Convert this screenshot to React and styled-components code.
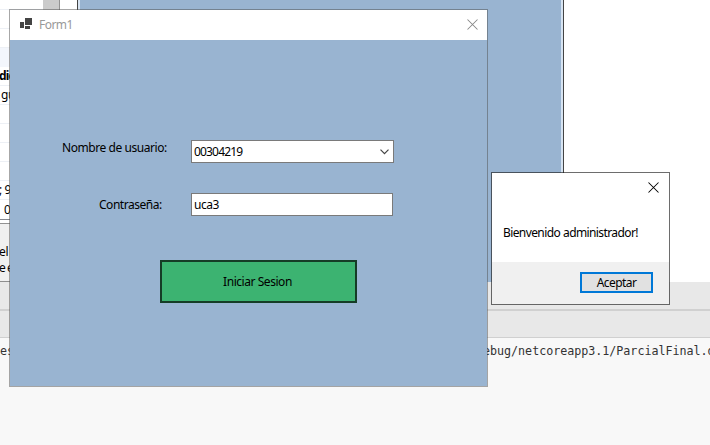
import React from "react";
import styled, { createGlobalStyle } from "styled-components";

const Global = createGlobalStyle`
  * { box-sizing: border-box; }
  body { margin: 0; overflow: hidden; }
  button, input { margin: 0; border-radius: 0; outline: 0; appearance: none; }
`;

const Desktop = styled.main`
  position: relative;
  width: 710px;
  height: 445px;
  overflow: hidden;
  display: flex;
  flex-direction: column;
  background: #f8f8f8;
  color: #000;
  font: 12px/16px "Noto Sans", "Open Sans", sans-serif;
`;

const Workspace = styled.div`
  height: 282px;
  display: flex;
  background: #fff;
`;

const Explorer = styled.div`
  width: 43px;
  height: 282px;
  display: flex;
  flex-direction: column;
  overflow: hidden;
`;

const GridRow = styled.div`
  height: ${(p) => p.$h}px;
  flex: none;
  padding-left: ${(p) => p.$x || 0}px;
  border-bottom: 1px solid ${(p) => p.$line || "#edf0f5"};
  background: ${(p) => p.$bg || "#fff"};
  font-weight: ${(p) => (p.$bold ? 700 : 400)};
  line-height: ${(p) => p.$h - 1}px;
  letter-spacing: ${(p) => (p.$bold ? -0.8 : -0.4)}px;
  text-indent: ${(p) => p.$shift || 0}px;
  white-space: nowrap;
`;

const HelpPanel = styled.div`
  height: 58px;
  flex: none;
  padding-top: 20px;
  background: #f0f0f0;
  border-bottom: 1px solid #8e8e8e;
  text-indent: -1px;
  white-space: nowrap;
`;

const HelpLine = styled.div`
  letter-spacing: ${(p) => p.$track}px;
`;

const Scrollbar = styled.div`
  width: 17px;
  background: #cbcbcb;
  border-right: 1px solid #929292;
`;

const DesignerForm = styled.div`
  width: 487px;
  margin-left: 17px;
  border: solid #444;
  border-width: 0 1px;
  padding: 0 2px;
  background: #d7e4f2;
`;

const DesignerSurface = styled.div`
  height: 100%;
  background: #99b4d1;
`;

const ToolBand = styled.div`
  height: ${(p) => p.$h}px;
  background: #e8e8e8;
  border-bottom: ${(p) => p.$line}px solid #d0d0d0;
`;

const Console = styled.div`
  display: flex;
  justify-content: space-between;
  padding-top: 5px;
  font: 11.7px/17px "DejaVu Sans Mono", monospace;
  letter-spacing: -0.02px;
  color: #333;
  white-space: pre;
`;

const ConsoleTail = styled.span`
  width: 234px;
`;

const Window = styled.section`
  position: absolute;
  left: ${(p) => p.$x}px;
  top: ${(p) => p.$y}px;
  width: ${(p) => p.$w}px;
  height: ${(p) => p.$h}px;
  border: 1px solid ${(p) => p.$line};
  background: ${(p) => p.$bg};
  background-clip: padding-box;
  display: flex;
  flex-direction: column;
`;

const TitleBar = styled.header`
  height: 30px;
  flex: none;
  display: flex;
  align-items: center;
  padding: 0 9px 1px 9px;
  background: #fff;
`;

const Title = styled.h1`
  flex: 1;
  margin: 1px 0 0 6px;
  font-size: 12px;
  font-weight: 400;
  letter-spacing: -0.55px;
  color: #999;
`;

const CloseButton = styled.button`
  display: flex;
  padding: 0;
  border: 0;
  background: none;
  color: ${(p) => p.$color};
`;

const LoginForm = styled.form`
  padding-top: 100px;
`;

const Field = styled.div`
  height: 53px;
  display: flex;
  align-items: flex-start;
`;

const Label = styled.label`
  width: ${(p) => p.$w}px;
  padding: ${(p) => p.$top}px 0 0 ${(p) => p.$x}px;
  letter-spacing: ${(p) => p.$track}px;
  white-space: nowrap;
`;

const Box = styled.div`
  width: ${(p) => p.$w}px;
  height: 23px;
  display: flex;
  align-items: center;
  padding: 0 4px 0 2px;
  border: 1px solid #7a7a7a;
  background: #fff;
`;

const Input = styled.input`
  flex: 1;
  min-width: 0;
  height: 20px;
  padding: 0 0 1px;
  border: 0;
  background: none;
  color: #000;
  font: inherit;
  letter-spacing: ${(p) => p.$track}px;
`;

const SubmitButton = styled.button`
  display: block;
  width: 197px;
  height: 43px;
  margin: 14px 0 0 150px;
  padding: 0 2px 0 0;
  border: 2px solid #153c26;
  background: #3cb371;
  color: #000;
  font: inherit;
  letter-spacing: -0.45px;
`;

const MessageHead = styled.header`
  height: 29px;
  display: flex;
  justify-content: flex-end;
  padding: 9px 10px 0 0;
`;

const Message = styled.p`
  height: 60px;
  margin: 0;
  padding: 23px 0 0 11px;
  letter-spacing: -0.6px;
  word-spacing: 0.4px;
  white-space: nowrap;
`;

const MessageFooter = styled.footer`
  flex: 1;
  display: flex;
  justify-content: flex-end;
  align-items: flex-start;
  padding: 10px 16px 0 0;
  background: #f0f0f0;
`;

const AcceptButton = styled.button`
  width: 73px;
  height: 21px;
  padding: 0;
  border: 2px solid #0078d7;
  background: #e1e1e1;
  color: #000;
  font: 12px/16px "Noto Sans", "Open Sans", sans-serif;
  letter-spacing: -0.55px;
`;

const CloseIcon = () => (
  <svg width="11" height="11" viewBox="0 0 11 11">
    <path d="M.5 .5l10 10M10.5 .5l-10 10" fill="none" stroke="currentColor" strokeWidth="1.05" />
  </svg>
);

const FormIcon = () => (
  <svg width="14" height="13" viewBox="0 0 14 13" fill="#444" shapeRendering="crispEdges">
    <path d="M6 0h7v7H6zM1 4h4v6H1zM6 8h5v3H6z" />
  </svg>
);

const Chevron = () => (
  <svg width="9" height="6" viewBox="0 0 9 6">
    <path d="M.5 .7l4 4 4-4" fill="none" stroke="#444" strokeWidth="1.2" />
  </svg>
);

export default function App() {
  return (
    <Desktop>
      <Global />
      <Workspace>
        <Explorer>
          <GridRow $h={10} />
          <GridRow $h={19} />
          <GridRow $h={19} />
          <GridRow $h={19} $bg="#f3f6fc" $line="#f3f6fc" />
          <GridRow $h={19} $bold $shift={-1}>dic</GridRow>
          <GridRow $h={19} $x={1}>gu</GridRow>
          <GridRow $h={19} />
          <GridRow $h={19} />
          <GridRow $h={19} />
          <GridRow $h={19} />
          <GridRow $h={19} $shift={-1}>; 9</GridRow>
          <GridRow $h={20} $x={4} $line="#84878d">0</GridRow>
          <GridRow $h={4} $line="#929292" />
          <HelpPanel>
            <HelpLine $track={-0.2}>el</HelpLine>
            <HelpLine $track={-0.9}>e e</HelpLine>
          </HelpPanel>
        </Explorer>
        <Scrollbar />
        <DesignerForm><DesignerSurface /></DesignerForm>
      </Workspace>
      <ToolBand $h={29} $line={2} />
      <ToolBand $h={27} $line={1} />
      <Console>
        <span>es</span>
        <ConsoleTail>debug/netcoreapp3.1/ParcialFinal.d</ConsoleTail>
      </Console>

      <Window $x={9} $y={9} $w={479} $h={378} $bg="#99b4d1" $line="rgba(80, 80, 80, 0.5)">
        <TitleBar>
          <FormIcon />
          <Title>Form1</Title>
          <CloseButton $color="#888" aria-label="Cerrar"><CloseIcon /></CloseButton>
        </TitleBar>
        <LoginForm>
          <Field>
            <Label $w={181} $x={52} $top={0} $track={-0.44} htmlFor="user">Nombre de usuario:</Label>
            <Box $w={203}>
              <Input id="user" $track={-0.83} defaultValue="00304219" />
              <Chevron />
            </Box>
          </Field>
          <Field>
            <Label $w={181} $x={89} $top={4} $track={-0.48} htmlFor="pass">Contraseña:</Label>
            <Box $w={202}>
              <Input id="pass" $track={-0.5} defaultValue="uca3" />
            </Box>
          </Field>
          <SubmitButton type="button">Iniciar Sesion</SubmitButton>
        </LoginForm>
      </Window>

      <Window $x={491} $y={172} $w={179} $h={133} $bg="#fff" $line="rgba(30, 30, 30, 0.65)">
        <MessageHead>
          <CloseButton $color="#000" aria-label="Cerrar"><CloseIcon /></CloseButton>
        </MessageHead>
        <Message>Bienvenido administrador!</Message>
        <MessageFooter>
          <AcceptButton type="button">Aceptar</AcceptButton>
        </MessageFooter>
      </Window>
    </Desktop>
  );
}
